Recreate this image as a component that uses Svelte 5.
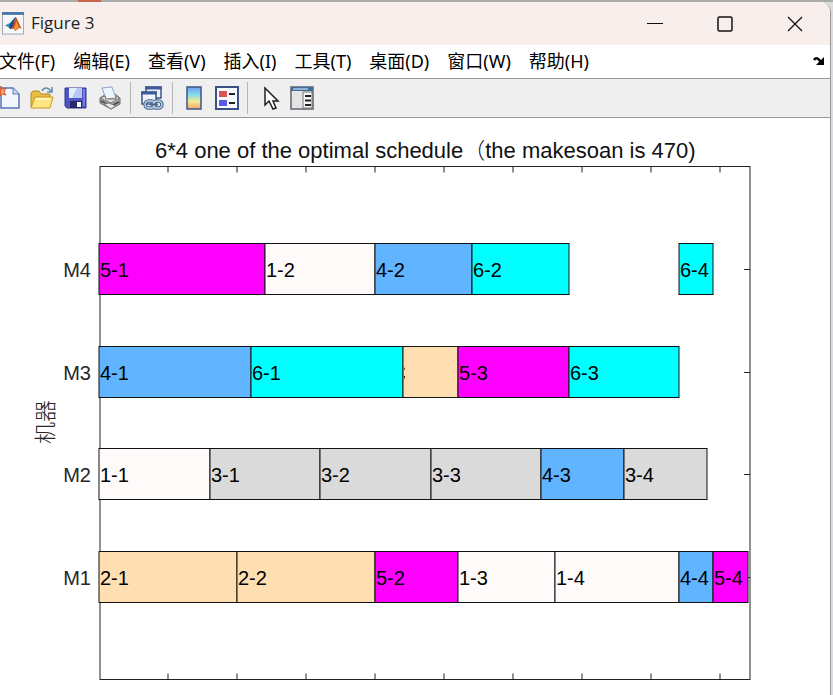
<script>
  export let title = "Figure 3";

  const menus = [
    "文件(F)",
    "编辑(E)",
    "查看(V)",
    "插入(I)",
    "工具(T)",
    "桌面(D)",
    "窗口(W)",
    "帮助(H)",
  ];

  // job number -> bar colour
  const colors = {
    1: "#fffafa",
    2: "#ffdfb2",
    3: "#dadada",
    4: "#61b4ff",
    5: "#ff00ff",
    6: "#00ffff",
  };

  // machine, start, end, label
  const tasks = [
    [4, 0, 120, "5-1"],
    [4, 120, 200, "1-2"],
    [4, 200, 270, "4-2"],
    [4, 270, 340, "6-2"],
    [4, 420, 445, "6-4"],
    [3, 0, 110, "4-1"],
    [3, 110, 220, "6-1"],
    [3, 220, 260, "2-3"],
    [3, 260, 340, "5-3"],
    [3, 340, 420, "6-3"],
    [2, 0, 80, "1-1"],
    [2, 80, 160, "3-1"],
    [2, 160, 240, "3-2"],
    [2, 240, 320, "3-3"],
    [2, 320, 380, "4-3"],
    [2, 380, 440, "3-4"],
    [1, 0, 100, "2-1"],
    [1, 100, 200, "2-2"],
    [1, 200, 260, "5-2"],
    [1, 260, 330, "1-3"],
    [1, 330, 420, "1-4"],
    [1, 420, 445, "4-4"],
    [1, 445, 470, "5-4"],
  ];

  const xTicks = [0, 50, 100, 150, 200, 250, 300, 350, 400, 450];
  const left = 100;
  const right = 750;
  const top = 48.5;
  const bottom = 561.5;

  const x = (t) => Math.round(99.4 + t * 1.38);
  const y = (m) => Math.round(top + ((bottom - top) * (5 - m)) / 5) + 0.5;
</script>

<svelte:head>
  <title>{title}</title>
</svelte:head>

<div class="desktop">
  <div class="window">
    <header class="titlebar">
      <svg class="logo" viewBox="0 0 24 24" aria-hidden="true">
        <rect x="0.5" y="1" width="22" height="22" fill="#f4f8fb" stroke="#9aa6b4" />
        <rect x="0" y="0" width="23" height="3" fill="#4779a8" />
        <path d="M3 14l6-3 3 3-3 4-2-2z" fill="#3c8fc2" />
        <path d="M9 11l5-6-2 10-3 3-2-2z" fill="#1d4f87" />
        <path d="M14 5c2 1 4 9 7 13-3-3-5 0-7 2-1-2-2-3-5-2 3-2 4-8 5-13z" fill="#d9481c" />
        <path d="M15 9c1 3 2 6 3 8-2-1-3 1-4 2-1-1-1-2-2-2 2-2 2-5 3-8z" fill="#f49b2b" />
      </svg>
      <h1>{title}</h1>
      <div class="controls">
        <button aria-label="Minimize">
          <svg viewBox="0 0 16 16"><path d="M0 7.500h16" /></svg>
        </button>
        <button aria-label="Maximize">
          <svg viewBox="0 0 16 16"><rect x="1" y="1" width="14" height="14" rx="1.5" stroke-width="1.5" /></svg>
        </button>
        <button aria-label="Close">
          <svg viewBox="0 0 16 16"><path d="M1 1l14 14M15 1L1 15" stroke-width="1.3" /></svg>
        </button>
      </div>
    </header>

    <nav class="menubar">
      {#each menus as menu}
        <button>{menu}</button>
      {/each}
      <button class="dock" aria-label="Dock figure">
        <svg viewBox="0 0 12 10">
          <path d="M1 4c2-3 4-2 7 2" fill="none" stroke="#000" stroke-width="2.5" />
          <path d="M11 1v8H3z" />
        </svg>
      </button>
    </nav>

    <div class="toolbar" role="toolbar" aria-label="Figure toolbar">
      <div class="group files">
        <button aria-label="New figure">
          <svg viewBox="0 0 24 24">
            <path d="M5 2h12l6 6v14H5z" fill="#f1f6ff" stroke="#5a73b8" stroke-width="1.5" />
            <path d="M17 2v6h6" fill="#cddcf5" stroke="#5a73b8" />
            <path d="M5 0l1 3 4-1-2 4 2 3-4-1-2 2z" fill="#f7a069" stroke="#d9552b" />
          </svg>
        </button>
        <button aria-label="Open">
          <svg viewBox="0 0 24 24">
            <path d="M12 5c2-4 6-4 9 0M17 6h5V1" fill="none" stroke="#6d8eb0" stroke-width="1.6" />
            <path d="M1 21V7l2-2h6l2 3h9v13z" fill="#e9bd43" stroke="#b78b1d" />
            <path d="M1 22l4-11h18l-3 11z" fill="#ffe681" stroke="#c79a25" />
            <path d="M6 13h14" stroke="#fff6be" stroke-width="2" />
          </svg>
        </button>
        <button aria-label="Save">
          <svg viewBox="0 0 24 24">
            <path d="M1 2h21v20H3l-2-2z" fill="#4d55c5" stroke="#30358f" />
            <path d="M5 2h13v10H5z" fill="#e4edff" />
            <path d="M13 2h5v10H8z" fill="#b6c8f0" />
            <path d="M6 15h12v7H6z" fill="#282b67" />
            <path d="M13 16h4v5h-4z" fill="#fff" />
            <path d="M19 3h2v17h-2z" fill="#767ee0" />
          </svg>
        </button>
        <button aria-label="Print">
          <svg viewBox="0 0 24 24">
            <path d="M2 12l6-4h9l5 4v6l-9 5-11-6z" fill="#a6a6a6" stroke="#6d6d6d" />
            <path d="M4 2l10-1 4 11-10 1z" fill="#edf5ff" stroke="#8da4c2" />
            <path d="M2 12l5-2 1 3h10v-3l4 2-9 5z" fill="#dedede" stroke="#777" />
            <path d="M3 15l10 5 8-4" fill="none" stroke="#474747" stroke-width="1.5" />
            <path d="M6 18l5-1 7 3-5 3z" fill="#e7e7e7" stroke="#777" />
          </svg>
        </button>
      </div>
      <span class="separator"></span>
      <button aria-label="Link plot">
        <svg viewBox="0 0 24 24">
          <rect x="6" y="1" width="15" height="11" fill="#e9f0fa" stroke="#3e5688" stroke-width="1.5" />
          <path d="M5 2h17" stroke="#3d5c99" stroke-width="3" />
          <rect x="2" y="6" width="14" height="12" fill="#f1f6fd" stroke="#3e5688" stroke-width="1.5" />
          <path d="M1 7h16" stroke="#3d5c99" stroke-width="3" />
          <g fill="none">
            <rect x="5" y="15" width="10" height="7" rx="3.5" stroke="#47658b" stroke-width="3.5" />
            <rect x="13" y="15" width="9" height="7" rx="3.5" stroke="#47658b" stroke-width="3.5" />
            <rect x="5" y="15" width="10" height="7" rx="3.5" stroke="#b9d2eb" stroke-width="1.5" />
            <rect x="13" y="15" width="9" height="7" rx="3.5" stroke="#b9d2eb" stroke-width="1.5" />
            <path d="M10 18.500h8" stroke="#47658b" stroke-width="2" />
          </g>
        </svg>
      </button>
      <span class="separator"></span>
      <div class="group">
        <button aria-label="Insert colorbar">
          <svg viewBox="0 0 24 24">
            <defs>
              <linearGradient id="colorbar" x1="0" y1="0" x2="0" y2="1">
                <stop offset="0" stop-color="#729cf0" />
                <stop offset="0.35" stop-color="#82dceb" />
                <stop offset="0.65" stop-color="#f2ed91" />
                <stop offset="1" stop-color="#f5a16f" />
              </linearGradient>
            </defs>
            <rect x="5" y="1" width="14" height="22" fill="url(#colorbar)" stroke="#3f5686" stroke-width="1.5" />
          </svg>
        </button>
        <button aria-label="Insert legend">
          <svg viewBox="0 0 24 24">
            <rect x="1" y="1" width="22" height="22" fill="#f7faff" stroke="#3c4f82" stroke-width="2" />
            <rect x="4" y="5" width="8" height="6" fill="#e05252" />
            <rect x="4" y="14" width="8" height="6" fill="#5959e6" />
            <path d="M14 8h6M14 17h6" stroke="#222" stroke-width="2" />
          </svg>
        </button>
      </div>
      <span class="separator"></span>
      <div class="group">
        <button aria-label="Edit plot">
          <svg viewBox="0 0 24 24">
            <path d="M8 2v17l4-4 4 8 3-1-3-7h5z" fill="#fff" stroke="#222" stroke-width="1.5" />
          </svg>
        </button>
        <button aria-label="Open property inspector">
          <svg viewBox="0 0 24 24">
            <rect x="1" y="1" width="22" height="22" fill="#e4e4e4" stroke="#60666d" stroke-width="1.5" />
            <path d="M1 3h22" stroke="#416b96" stroke-width="4" />
            <path d="M3 3h15" stroke="#a9cbea" stroke-width="1.5" />
            <path d="M13 6h9v16h-9z" fill="#f7f7f7" stroke="#777" />
            <path d="M15 10h6M15 14.500h6M15 19h6" stroke="#222" stroke-width="2" />
          </svg>
        </button>
      </div>
    </div>

    <main>
      <svg class="chart" viewBox="0 0 830 620" role="img" aria-label="Gantt chart">
        <defs>
          <clipPath id="covered">
            <rect x={x(220)} y="240" width="2" height="30" />
          </clipPath>
        </defs>

        <text class="heading" x="155" y="40">6*4 one of the optimal schedule<tspan class="cjk">（</tspan>the makesoan is 470)</text>
        <text class="ylabel" text-anchor="middle" transform="translate(53 304) rotate(-90)">机器</text>

        <g class="axes">
          <rect x={left} y={top} width={right - left} height={bottom - top} />
          {#each xTicks.slice(1) as t}
            <path d="M{x(t)} {top}v6M{x(t)} {bottom}v-6" />
          {/each}
          {#each [1, 2, 3, 4] as m}
            <path d="M{right} {y(m)}h-6" />
          {/each}
        </g>

        {#each [1, 2, 3, 4] as m}
          <text class="tick" x="91" y={y(m) + 7} text-anchor="end">M{m}</text>
        {/each}
        {#each xTicks as t}
          <text class="tick" x={x(t)} y="591" text-anchor="middle">{t}</text>
        {/each}

        {#each tasks as [machine, start, end, label]}
          <rect
            class="bar"
            x={x(start)}
            y={y(machine) - 26}
            width={x(end) - x(start)}
            height="51"
            fill={colors[label[0]]}
          />
          {#if label === "2-3"}
            <text x={x(start)} y={y(machine) + 7} clip-path="url(#covered)">3</text>
          {:else}
            <text x={x(start) + 1} y={y(machine) + 7}>{label}</text>
          {/if}
        {/each}
      </svg>
    </main>
  </div>
</div>

<style>
  :global(body) {
    margin: 0;
    overflow: hidden;
  }
  .desktop {
    box-sizing: border-box;
    height: 100vh;
    padding: 2px 2px 0 0;
    background: linear-gradient(90deg, #ababab 78px, #c96650 78px, #c96650 101px, #ababab 101px) top / 100% 2px
      no-repeat #dcdcdf;
  }
  .window {
    box-sizing: border-box;
    height: 100%;
    overflow: hidden;
    border-right: 1px solid #999;
    border-top-right-radius: 10px;
    background: #fff;
  }
  button {
    display: flex;
    align-items: center;
    justify-content: center;
    padding: 0;
    border: 0;
    background: none;
    color: #000;
    font: inherit;
  }
  .titlebar {
    display: flex;
    align-items: center;
    height: 43px;
    padding-left: 2px;
    background: #f8efed;
  }
  .logo {
    width: 23px;
    height: 23px;
  }
  h1 {
    margin: 0 0 2px 6px;
    font: 17px/24px "Open Sans", "Noto Sans", sans-serif;
    color: #222;
  }
  .controls {
    display: flex;
    align-self: stretch;
    margin-left: auto;
  }
  .controls button {
    width: 70px;
  }
  .controls svg {
    width: 16px;
    height: 16px;
    fill: none;
    stroke: #111;
  }
  .menubar {
    box-sizing: border-box;
    display: flex;
    align-items: center;
    gap: 18px;
    height: 34px;
    margin-left: -1px;
    padding-bottom: 2px;
    border-bottom: 1px solid #999;
    font: 18px/26px "Noto Sans", "Noto Sans CJK SC", sans-serif;
    white-space: nowrap;
  }
  .dock {
    margin: 0 5px 0 auto;
  }
  .dock svg {
    width: 12px;
    height: 10px;
  }
  .toolbar {
    display: flex;
    align-items: center;
    height: 38px;
    border-bottom: 1px solid #999;
    background: #efefef;
  }
  .toolbar button,
  .toolbar svg {
    width: 24px;
    height: 24px;
  }
  .group {
    display: flex;
    gap: 9px;
  }
  .files {
    gap: 10px;
    margin-left: -4px;
  }
  .separator {
    width: 1px;
    height: 32px;
    margin: 0 9px 0 8px;
    background: #b5b5b5;
  }
  .chart {
    display: block;
    width: 100%;
    font: 20px "Liberation Sans", Arial, sans-serif;
  }
  .heading {
    font-size: 22px;
    fill: #111;
  }
  .cjk {
    font-family: "Noto Sans CJK SC", sans-serif;
    font-weight: 300;
  }
  .ylabel {
    font: 300 22px "Noto Sans CJK SC", sans-serif;
    fill: #262626;
  }
  .tick {
    fill: #262626;
  }
  .axes {
    fill: none;
    stroke: #222;
  }
  .bar {
    stroke: #111;
  }
</style>
